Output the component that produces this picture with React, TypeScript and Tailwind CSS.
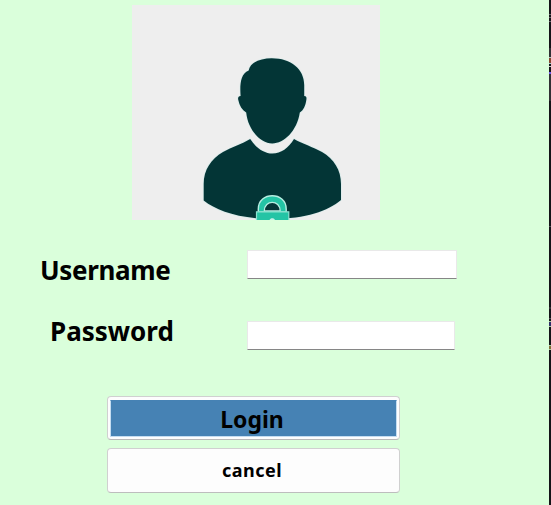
import React from "react";

function Avatar() {
  return (
    <svg className="block h-[215px] w-[248px]" viewBox="132 5 248 215" aria-label="User">
      <rect x="132" y="5" width="248" height="215" fill="#eeeeee" />
      <g fill="#033536" stroke="#dceceb" strokeWidth="1.6" paintOrder="stroke">
        <path d="M248.7 70.5C250 62.500 260.500 58.200 271.700 58.200C291 58.200 304.200 69 304.200 85L304.200 96C306.200 96.100 306.800 97.200 306.300 100C305.600 105.500 303.500 110.500 299.800 112.500C297 131 284 143.400 272.300 143.400C260.500 143.400 248 130 246.200 112.500C242 110 239.500 105.500 238.300 100C237.700 97.300 238.400 96.200 240.600 96C240 87 239.600 74 248.700 70.500Z" />
        <path d="M250.200 139C256 148 264 153.600 272.500 153.600C281 153.600 288.500 148 294 139C302 143.500 313 147 322 152C334 159 341 170 341 184L341 200C328 211 306 218.500 272.500 219.200C239 218.500 217 211 203.700 200.500L203.700 184C203.700 170 211 159 223 152C232 147 242 144 250.200 139Z" />
      </g>
      <path d="M258.300 212V209C258.300 191.300 286.200 191.300 286.200 209V212Z" fill="#24c4a5" stroke="#b7eee2" strokeWidth="1.400" />
      <path d="M264.300 211C264.300 199.500 280.200 199.500 280.200 211Z" fill="#073738" stroke="#b7eee2" strokeWidth="1.300" />
      <path d="M256.500 222V211.800H288.800V222Z" fill="#24c4a5" stroke="#8ce2d0" strokeWidth="1.200" />
      <path d="M269.500 220.500C269.500 217.500 275 217.500 275 220.500Z" fill="#c5f2e9" />
    </svg>
  );
}

function BackgroundEdge() {
  return (
    <div className="flex w-[2px] shrink-0 flex-col bg-[#141418]">
      <div className="mt-[14px] h-px bg-[#68686c]" />
      <div className="mt-[2px] h-px bg-[#68686c]" />
      <div className="mt-[3px] h-px bg-[#68686c]" />
      <div className="mt-[26px] h-[9px] bg-[#303034]" />
      <div className="h-px bg-[#b0c4c0]" />
      <div className="h-[5px] bg-[#86462f]" />
      <div className="h-px bg-[#9bc8cb]" />
      <div className="mt-[2px] h-px bg-[#cccccc]" />
      <div className="mt-[5px] h-[2px] bg-[#7057e8]" />
      <div className="h-[27px] bg-[#303034]" />
      <div className="mt-[125px] h-px bg-[#505056]" />
      <div className="mt-[80px] h-[2px] bg-[#303034]" />
      <div className="mt-[9px] h-px bg-[#505056]" />
      <div className="mt-[2px] h-px bg-[#a6cf9d]" />
      <div className="h-[4px] bg-[#302d69]" />
      <div className="h-px bg-[#a6cf9d]" />
      <div className="mt-[18px] h-px bg-[#a6cf9d]" />
      <div className="h-[3px] bg-[#806d36]" />
      <div className="h-px bg-[#a6cf9d]" />
    </div>
  );
}

export default function App() {
  return (
    <div className="flex h-[505px] w-[551px] overflow-hidden bg-[#daffdb] font-['Noto_Sans',sans-serif] text-black">
      <form className="flex min-w-0 flex-1 flex-col" onSubmit={(e) => e.preventDefault()}>
        <div className="pt-[5px] pl-[132px]">
          <Avatar />
        </div>
        <div className="mt-[30px] flex h-[29px] items-start">
          <label htmlFor="username" className="w-[207px] shrink-0 pt-[2px] pl-[40px] text-[26px] leading-[36px] font-bold tracking-[-0.35px] whitespace-nowrap">
            Username
          </label>
          <input id="username" className="ml-[40px] h-[29px] w-[210px] border border-[#e9e9e9] border-b-[#868686] bg-white px-2 text-base outline-none" />
        </div>
        <div className="mt-[42px] flex h-[29px] items-start">
          <label htmlFor="password" className="w-[207px] shrink-0 -mt-[8px] pl-[50px] text-[26px] leading-[36px] font-bold whitespace-nowrap">
            Password
          </label>
          <input id="password" type="password" className="ml-[40px] h-[29px] w-[208px] border border-[#e9e9e9] border-b-[#868686] bg-white px-2 text-base outline-none" />
        </div>
        <div className="mt-[46px] ml-[107px] flex w-[293px] flex-col gap-[8px]">
          <button type="submit" className="h-[44px] rounded-[4px] border border-[#d0d0d0] border-b-[#b8b8b8] bg-[#fdfdfd] px-[2px] pt-[3px] pb-[2px]">
            <span className="flex h-full items-center justify-center border border-[#c5ddf1] border-t-[#4682b4] bg-[#4682b4] pt-px pr-[3px] text-[23px] font-bold">
              Login
            </span>
          </button>
          <button type="button" className="h-[45px] rounded-[4px] border border-[#d0d0d0] border-b-[#bdbdbd] bg-[#fdfdfd] pr-[3px] text-[18px] font-bold tracking-[0.5px]">
            cancel
          </button>
        </div>
      </form>
      <BackgroundEdge />
    </div>
  );
}
